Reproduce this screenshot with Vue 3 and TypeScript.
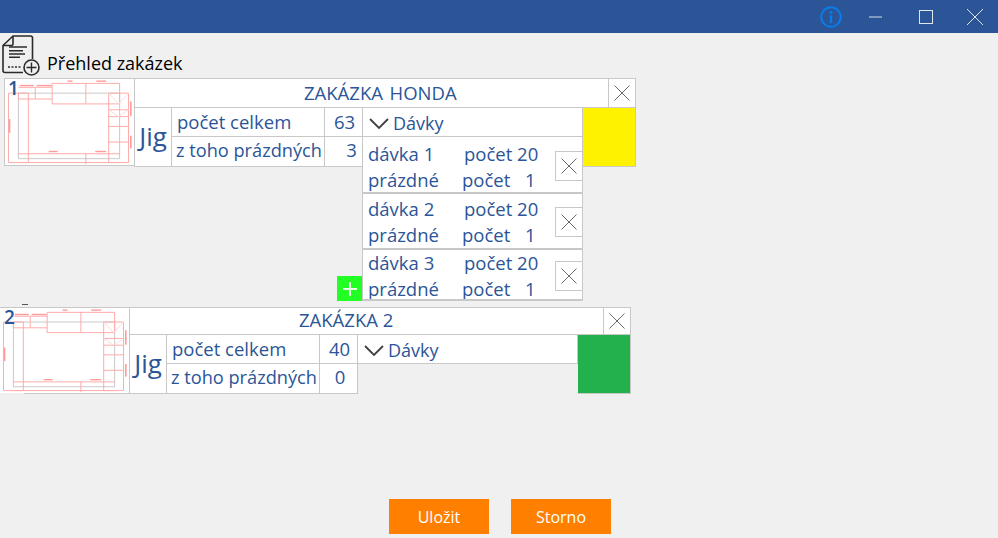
<template>
  <div class="app">
    <header class="titlebar">
      <svg class="win-info" width="24" height="24" viewBox="0 0 24 24" fill="none">
        <circle cx="12" cy="12" r="9.7" stroke="#0a7bea" stroke-width="2" />
        <circle cx="12" cy="7.4" r="1.5" fill="#0a7bea" />
        <rect x="10.8" y="10.4" width="2.4" height="7.6" fill="#0a7bea" />
      </svg>
      <svg class="win-btn min" width="16" height="16" viewBox="0 0 16 16"><path d="M2 8h13" stroke="#d5deea" stroke-width="1" /></svg>
      <svg class="win-btn max" width="16" height="16" viewBox="0 0 16 16"><rect x="1.5" y="1.5" width="13" height="13" fill="none" stroke="#dfe6f0" stroke-width="1" /></svg>
      <svg class="win-btn last" width="18" height="18" viewBox="0 0 18 18"><path d="M1 1l16 16M17 1L1 17" stroke="#dfe6f0" stroke-width="1" /></svg>
    </header>

    <div class="heading">
      <svg width="40" height="42" viewBox="0 0 40 42" fill="none" stroke="#2b2b2b" stroke-width="1.6">
        <path d="M31.5 25V4a2 2 0 0 0-2-2H12L2 11.5V36.5a2 2 0 0 0 2 2H22" stroke-linejoin="round" />
        <path d="M12 2V10a1.5 1.5 0 0 1-1.5 1.5H2" />
        <path d="M8 13h18M8 16.7h14M8 20h16M8 23.3h11" stroke-width="1.5" />
        <path d="M7 33h13" stroke-dasharray="2 1.5" stroke-width="1.5" />
        <circle cx="30.5" cy="33.5" r="7.5" stroke-width="1.6" fill="#f0f0f0" />
        <path d="M30.5 28.5v10M25.5 33.5h10" stroke-width="1.4" />
      </svg>
      <span>Přehled zakázek</span>
    </div>

    <section v-for="order in orders" :key="order.id" class="order" :class="{ second: order.id === 2 }">
      <div class="thumb">
        <svg class="drawing" viewBox="0 0 130 88" preserveAspectRatio="none" fill="none">
          <g transform="translate(-1 -1)">
            <g stroke="#c8c8c8" stroke-width="1">
              <path d="M14.5 15.5H116.5V82.5H14.5Z" />
            </g>
            <g stroke="#ffa9a9" stroke-width="1">
              <path d="M48.5 5.5H116.5V26.5H48.5ZM82.5 5V26M14.5 9.5H48.5M14.5 15.5V21.5H48.5M31.5 10V21" />
              <path d="M4.5 15.5H24.5V86.5H4.5Z" />
              <path d="M14.5 77.5H116.5M14.5 86.5H116.5M82.5 77V88" />
              <path d="M105.5 15.5H125.5V86.5H105.5ZM105 32.5H125M105 39.5H125M105 49.5H125M105 65.5H125" />
              <path d="M105.5 15.5l10 11 10-11M105.5 32.5l10 7 10-7" stroke="#ffd8d8" />
            </g>
            <g fill="#ff8a8a" opacity="0.85">
              <rect x="16" y="7" width="14" height="1.4" />
              <rect x="33" y="7" width="15" height="1.4" />
              <rect x="64" y="2.5" width="5" height="1.4" />
              <rect x="93" y="2.5" width="10" height="1.4" />
              <rect x="5" y="42" width="1.4" height="14" />
              <rect x="127" y="24" width="1.6" height="15" />
              <rect x="127" y="59" width="1.6" height="13" />
              <rect x="45" y="74.5" width="9" height="1.4" />
              <rect x="92" y="74.5" width="11" height="1.4" />
            </g>
          </g>
        </svg>
        <span class="thumb-no">{{ order.id }}</span>
      </div>

      <div class="body">
        <div class="title-row">
          <div class="title">{{ order.title }}</div>
          <button class="close title-close">
            <svg width="16" height="16" viewBox="0 0 16 16"><path d="M0.5 0.5l15 15M15.5 0.5l-15 15" stroke="#444" stroke-width="0.8" /></svg>
          </button>
        </div>

        <div class="detail">
          <div class="jig">Jig</div>
          <div class="stats">
            <div class="stat-row">
              <div class="stat-label">počet celkem</div>
              <div class="stat-value">{{ order.total }}</div>
            </div>
            <div class="stat-row">
              <div class="stat-label tight">z toho prázdných</div>
              <div class="stat-value">{{ order.empty }}</div>
            </div>
          </div>

          <div class="batches">
            <div class="batches-head">
              <svg width="20" height="11" viewBox="0 0 20 11" fill="none"><path d="M1 1l9 9 9-9" stroke="#404040" stroke-width="1.8" /></svg>
              <span>Dávky</span>
            </div>
            <div v-for="batch in order.batches" :key="batch" class="batch">
              <div class="batch-text">
                <div class="line"><span class="name">dávka {{ batch }}</span><span>počet 20</span></div>
                <div class="line"><span class="name alt">prázdné</span><span class="count">počet</span><span>1</span></div>
              </div>
              <button class="close batch-close">
                <svg width="16" height="16" viewBox="0 0 16 16"><path d="M0.5 0.5l15 15M15.5 0.5l-15 15" stroke="#444" stroke-width="0.8" /></svg>
              </button>
            </div>
            <button v-if="order.batches.length" class="add">
              <svg width="14" height="14" viewBox="0 0 14 14"><path d="M7 0v14M0 7h14" stroke="#eaffea" stroke-width="2" /></svg>
            </button>
          </div>

          <div class="state" :style="{ background: order.color }"></div>
        </div>
      </div>
      <span v-if="order.id === 2" class="stray"></span>
    </section>

    <div class="actions">
      <button class="action">Uložit</button>
      <button class="action">Storno</button>
    </div>
  </div>
</template>

<script setup lang="ts">
interface Order {
  id: number
  title: string
  total: number
  empty: number
  color: string
  batches: number[]
}

const orders: Order[] = [
  { id: 1, title: 'ZAKÁZKA  HONDA', total: 63, empty: 3, color: '#fff200', batches: [1, 2, 3] },
  { id: 2, title: 'ZAKÁZKA 2', total: 40, empty: 0, color: '#22b14c', batches: [] },
]
</script>

<style>
html, body { margin: 0; background: #f0f0f0; }
</style>

<style scoped>
.app { width: 998px; height: 538px; display: flex; flex-direction: column; background: #f0f0f0; color: #2b5597; font-family: "Open Sans", "Noto Sans", sans-serif; overflow: hidden; }
button { font-family: inherit; padding: 0; cursor: pointer; }

.titlebar { height: 33px; flex: none; background: #2b5597; display: flex; align-items: center; justify-content: flex-end; }
.win-info { margin-right: 24px; }
.win-btn.min { margin-right: 35px; }
.win-btn.max { margin-right: 32px; }
.win-btn.last { margin-right: 14px; }

.heading { height: 45px; flex: none; display: flex; align-items: flex-start; padding-left: 1px; padding-top: 1px; box-sizing: border-box; color: #000; font-size: 18px; }
.heading svg { flex: none; }
.heading span { margin: 18px 0 0 6px; line-height: 22px; }

.order { position: relative; flex: none; display: flex; align-items: flex-start; width: 632px; margin-left: 4px; height: 223px; margin-bottom: 6px; }
.order.second { margin-left: 0; width: 631px; height: 87px; }

.thumb { position: relative; width: 130px; height: 88px; flex: none; box-sizing: border-box; background: #fff; border: 1px solid #c8c8c8; border-right: 0; }
.second .thumb { width: 129px; height: 86px; border-width: 1px 0 0 0; }
.second .thumb::after { content: ""; position: absolute; left: 24px; right: 0; bottom: -1px; height: 1px; background: #c8c8c8; }
.drawing { display: block; width: 100%; height: 100%; }
.thumb-no { position: absolute; left: 3px; top: -3px; font-size: 19px; font-weight: 600; line-height: 24px; }
.second .thumb-no { left: 4px; top: -3px; }

.body { flex: 1; min-width: 0; }
.title-row { height: 30px; display: flex; box-sizing: border-box; background: #fff; border: 1px solid #c8c8c8; }
.second .title-row { height: 28px; }
.title { flex: 1; padding-left: 169px; font-size: 18.5px; line-height: 28px; white-space: pre; word-spacing: -1.5px; }
.second .title { line-height: 24px; word-spacing: 0; }
.close { display: flex; align-items: center; justify-content: center; background: #fff; border: 1px solid #c8c8c8; box-sizing: border-box; }
.title-close { width: 27px; border-width: 0 0 0 1px; }

.detail { display: flex; align-items: flex-start; }
.jig { width: 38px; height: 59px; box-sizing: border-box; flex: none; background: #fff; border: 1px solid #c8c8c8; border-width: 0 1px 1px 1px; text-align: center; font-size: 26px; line-height: 56px; }
.stats { width: 190px; flex: none; background: #fff; box-sizing: border-box; }
.second .stats { width: 191px; border-right: 1px solid #c8c8c8; }
.stat-row { display: flex; height: 29px; box-sizing: border-box; border-bottom: 1px solid #c8c8c8; font-size: 18.5px; line-height: 28px; }
.stat-row + .stat-row { height: 30px; line-height: 26px; }
.stat-label { width: 152px; flex: none; box-sizing: border-box; padding-left: 5px; white-space: nowrap; }
.stat-label.tight { padding-left: 4px; font-size: 18.2px; }
.stat-value { flex: 1; box-sizing: border-box; border-left: 1px solid #c8c8c8; text-align: center; padding-left: 2px; }
.stat-row + .stat-row .stat-value { padding-left: 16px; }
.second .stat-row + .stat-row .stat-value { padding-left: 3px; }

.batches { position: relative; width: 221px; flex: none; box-sizing: border-box; }
.second .batches { margin-left: -1px; }
.batches-head { height: 29px; box-sizing: border-box; background: #fff; border: 1px solid #c8c8c8; border-width: 0 1px 1px 1px; display: flex; align-items: center; padding: 2px 0 0 6px; gap: 4px; font-size: 18px; }
.batch { display: flex; justify-content: space-between; box-sizing: border-box; background: #fff; border: 1px solid #c8c8c8; border-width: 0 1px 2px 1px; overflow: hidden; height: 57px; padding-top: 4px; }
.batch:nth-of-type(3) { height: 56px; padding-top: 2px; }
.batch:nth-of-type(4) { height: 51px; padding-top: 0; }
.batch-text { padding-left: 5px; }
.line { display: flex; height: 26px; font-size: 18.5px; line-height: 26px; white-space: nowrap; }
.name { width: 96px; }
.name.alt { width: 94px; }
.count { width: 63px; }
.batch-close { width: 27px; height: 30px; border-right: 0; margin-top: 10px; flex: none; }
.batch:nth-of-type(3) .batch-close { margin-top: 11px; }
.batch:nth-of-type(4) .batch-close { margin-top: 11px; }
.add { position: absolute; left: -25px; bottom: 0; width: 25px; height: 25px; border: 0; background: #22ff22; display: flex; align-items: center; justify-content: center; }

.state { flex: 1; height: 59px; box-sizing: border-box; border: 1px solid #c8c8c8; border-width: 0 1px 1px 0; }
.stray { position: absolute; left: 22px; top: -3px; width: 6px; height: 1px; background: #555; }

.actions { margin-top: auto; display: flex; justify-content: center; gap: 22px; padding: 0 0 4px 2px; }
.action { width: 100px; height: 35px; border: 0; background: #ff8000; color: #fff; font-size: 16px; }
</style>
